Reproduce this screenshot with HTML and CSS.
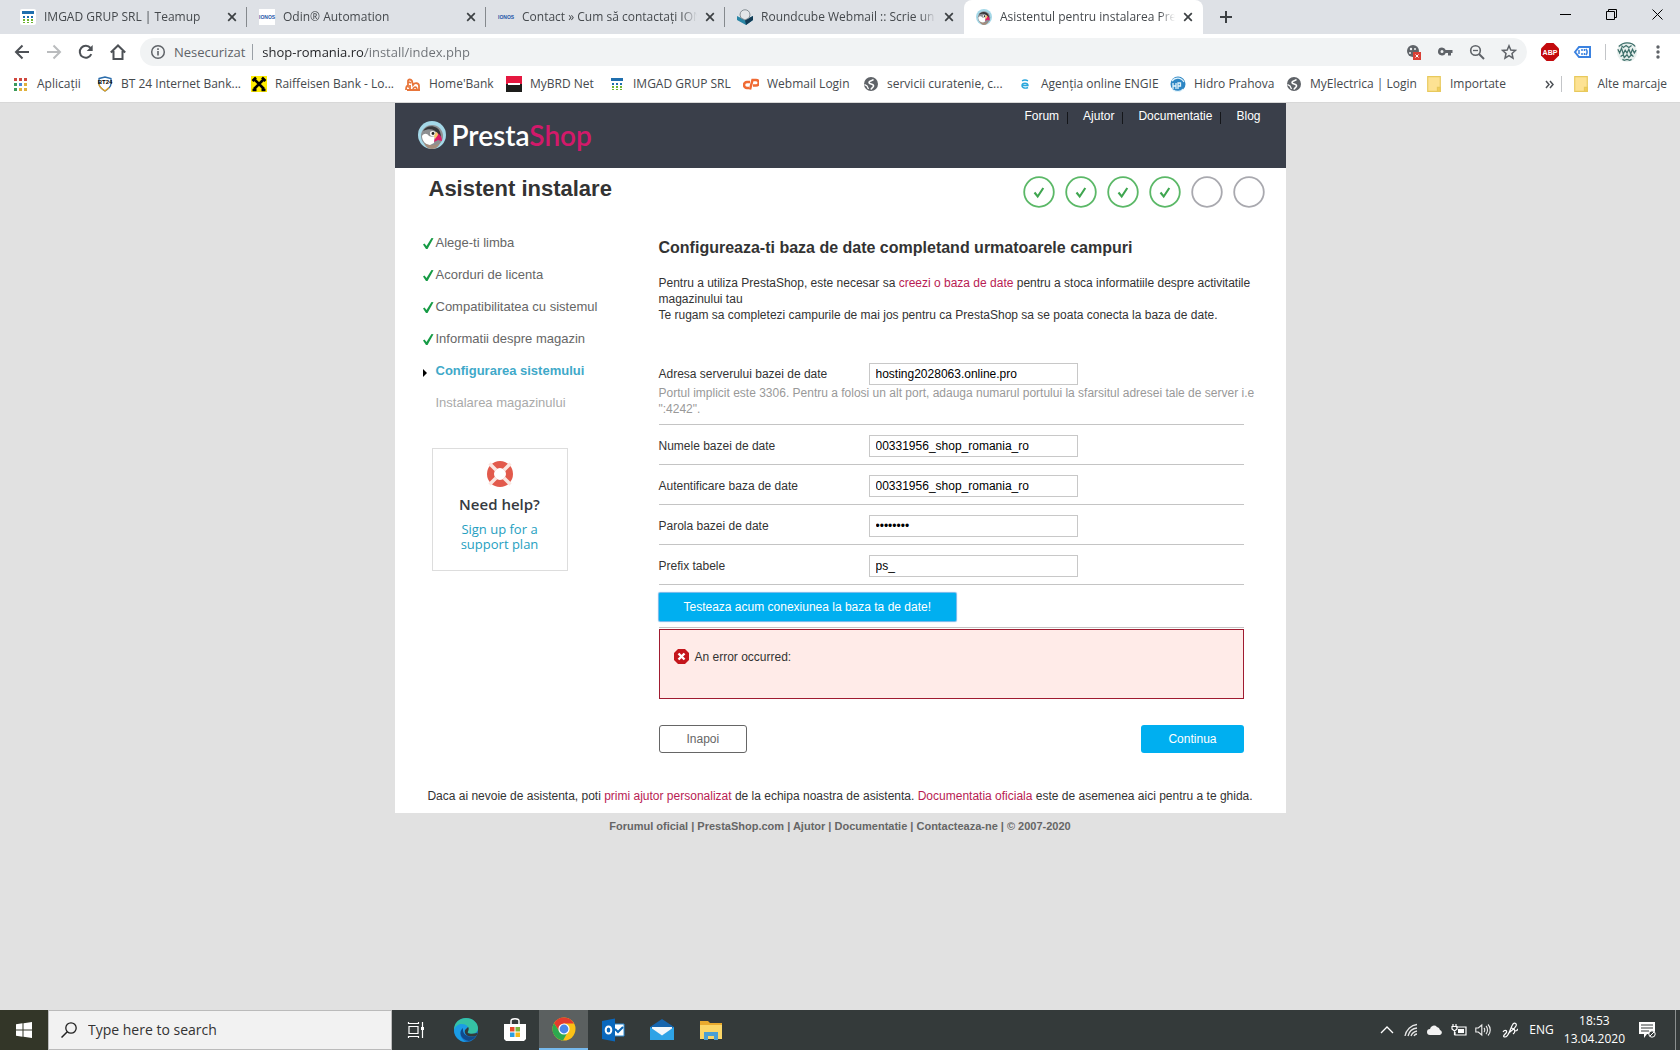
FILE: index.html
```html
<!DOCTYPE html>
<html lang="ro">
<head>
<meta charset="utf-8">
<title>Asistentul pentru instalarea PrestaShop</title>
<link rel="stylesheet" href="styles.css">
</head>
<body>
<svg class="defs" aria-hidden="true">
  <symbol id="close" viewBox="0 0 10 10"><path d="M1.2 1.2l7.6 7.6M8.8 1.2L1.2 8.8" stroke="#3c4043" stroke-width="1.7" fill="none"/></symbol>
  <symbol id="teamup" viewBox="0 0 16 16"><rect x="2" y="2" width="12" height="3" fill="#1f6fae"/><g fill="#1f6fae"><rect x="3" y="7" width="2" height="2"/><rect x="7" y="7" width="2" height="2"/><rect x="11" y="7" width="2" height="2"/></g><g fill="#6db52e"><rect x="3" y="10" width="2" height="2"/><rect x="7" y="10" width="2" height="2"/><rect x="11" y="10" width="2" height="2"/><rect x="3" y="13" width="2" height="1"/><rect x="7" y="13" width="2" height="1"/><rect x="11" y="13" width="2" height="1"/></g></symbol>
  <symbol id="globe" viewBox="0 0 16 16"><circle cx="8" cy="8" r="7" fill="#5f6368"/><path d="M10.500 3.500C9 5 6 4.500 6 6.500s4 1 4.500 3-2 2-2.500 4" fill="none" stroke="#fff" stroke-width="1.600"/><path d="M1.500 8.500L4 10l1.500 3" fill="none" stroke="#fff" stroke-width="1.300"/></symbol>
  <symbol id="folder" viewBox="0 0 12 14"><path d="M.5.5h11v13h-11z" fill="#fde293" stroke="#e8c95c"/><path d="M9 10h2.500v3.500H9z" fill="#f3cf5b" stroke="#e8c95c"/></symbol>
  <symbol id="puffin" viewBox="0 0 28 28"><circle cx="14" cy="14" r="14" fill="#a4d8e8"/><circle cx="14" cy="15" r="11" fill="#8d8f92"/><path d="M5 10c3-5 9-6 14-3 3 2 4 6 4 10l-3-4c-3-5-9-6-15-3z" fill="#37373a"/><path d="M4 15c2-3 5-3 7 0 2 1 5 1 6 0l-1 7-4 2c-4 0-8-4-8-9z" fill="#fff"/><path d="M12 11c2-2 5-1 6 1l-1 3c-2 1-4 0-5-1z" fill="#f4f4f4"/><circle cx="15" cy="12.500" r="1.400" fill="#222"/><path d="M18 12c3 0 6 3 6 8l-4-1-4 2z" fill="#df1a67"/><path d="M18 11c1 0 2 1 2 3l-3 4-1-3z" fill="#f5c66a"/><path d="M6 22c5 3 11 3 16 0-1 3-4 6-8 6s-7-3-8-6z" fill="#a58d7c"/></symbol>
  <symbol id="tick" viewBox="0 0 12 13"><path d="M1 7.500l1.500-1 2 2.500L9.500 1l2 .3L5.500 12H4z" fill="#169b45"/></symbol>
  <symbol id="step-done" viewBox="0 0 32 32"><circle cx="16" cy="16" r="14.800" fill="#fff" stroke="#5bb867" stroke-width="1.800"/><path d="M11.500 16.500l3.200 4 5.600-8.500" fill="none" stroke="#3fa650" stroke-width="2.100"/></symbol>
  <symbol id="step-todo" viewBox="0 0 32 32"><circle cx="16" cy="16" r="14.800" fill="#fff" stroke="#a9a9af" stroke-width="1.800"/></symbol>
</svg>

<header class="browser">
  <div class="tabs">
    <div class="tab"><svg class="fav"><rect width="16" height="16" rx="2" fill="#fff"/><use href="#teamup"/></svg><span class="tab-title">IMGAD GRUP SRL | Teamup</span><button class="tab-close" aria-label="Close"><svg><use href="#close"/></svg></button></div>
    <div class="tab"><span class="fav ionos boxed">IONOS</span><span class="tab-title">Odin® Automation</span><button class="tab-close" aria-label="Close"><svg><use href="#close"/></svg></button></div>
    <div class="tab"><span class="fav ionos">IONOS</span><span class="tab-title">Contact » Cum să contactați IONOS</span><button class="tab-close" aria-label="Close"><svg><use href="#close"/></svg></button></div>
    <div class="tab last"><svg class="fav" viewBox="0 0 16 16"><path d="M0 7l8 4 8-4v4l-7 5-9-5z" fill="#2a86a6"/><path d="M8 11l8-4v4l-7 5z" fill="#123b55"/><path d="M3 6c0-7 10-7 10 0l-1 3-4 2-4-2z" fill="#e3e6e8" stroke="#6f7a80" stroke-width=".8"/></svg><span class="tab-title">Roundcube Webmail :: Scrie un mesaj</span><button class="tab-close" aria-label="Close"><svg><use href="#close"/></svg></button></div>
    <div class="tab active"><svg class="fav"><use href="#puffin"/></svg><span class="tab-title">Asistentul pentru instalarea PrestaShop</span><button class="tab-close" aria-label="Close"><svg><use href="#close"/></svg></button></div>
    <button class="new-tab" aria-label="New tab"><svg viewBox="0 0 12 12"><path d="M6 0v12M0 6h12" stroke="#3c4043" stroke-width="2"/></svg></button>
    <div class="window-buttons">
      <button aria-label="Minimize"><svg viewBox="0 0 11 11"><path d="M0 5.500h11" stroke="#000"/></svg></button>
      <button aria-label="Restore"><svg viewBox="0 0 11 11"><path d="M.5 2.500h8v8h-8zM2.500 2.500v-2h8v8h-2" stroke="#000" fill="none"/></svg></button>
      <button aria-label="Close window"><svg viewBox="0 0 11 11"><path d="M.5.5l10 10M10.500.5l-10 10" stroke="#000"/></svg></button>
    </div>
  </div>

  <div class="toolbar">
    <button class="tool" aria-label="Back"><svg viewBox="0 0 16 16"><path d="M15 8H2.500M8.500 1.500L2 8l6.500 6.500" fill="none" stroke="#4d5156" stroke-width="2"/></svg></button>
    <button class="tool" aria-label="Forward"><svg viewBox="0 0 16 16"><path d="M1 8h12.500M7.500 1.500L14 8l-6.500 6.500" fill="none" stroke="#babcbe" stroke-width="2"/></svg></button>
    <button class="tool" aria-label="Reload"><svg viewBox="0 0 16 16"><path d="M13.300 10.200A6 6 0 1 1 12.500 4" fill="none" stroke="#4d5156" stroke-width="2"/><path d="M14.700 1v6H8.700z" fill="#4d5156"/></svg></button>
    <button class="tool" aria-label="Home"><svg viewBox="0 0 16 16"><path d="M.8 8.500L8 1.500l7.200 7M3.500 7v8h9V7" fill="none" stroke="#4d5156" stroke-width="2"/></svg></button>
    <div class="omnibox">
      <svg viewBox="0 0 16 16"><circle cx="8" cy="8" r="6.300" fill="none" stroke="#5f6368" stroke-width="1.500"/><path d="M8 7v4.500M8 4.300v1.600" stroke="#5f6368" stroke-width="1.600"/></svg>
      <span class="insecure">Nesecurizat</span>
      <input class="url" type="text" aria-label="Adresa" value="shop-romania.ro/install/index.php">
      <svg viewBox="0 0 16 16"><circle cx="8" cy="7" r="6" fill="#5f6368"/><circle cx="6" cy="5" r="1.200" fill="#f1f3f4"/><circle cx="5" cy="9" r="1" fill="#f1f3f4"/><circle cx="10" cy="5" r="1" fill="#f1f3f4"/><path d="M8 8h8v8H8z" fill="#d93f35"/><path d="M10.500 10.500l3 3m0-3l-3 3" stroke="#fff"/></svg>
      <svg viewBox="0 0 16 16"><path d="M5 3.500a4 4 0 1 0 3.700 5.500H11v2.500h3V9h1.500V6H8.700A4 4 0 0 0 5 3.500zM5 6a1.500 1.500 0 1 1 0 3 1.500 1.500 0 0 1 0-3z" fill="#5f6368"/></svg>
      <svg viewBox="0 0 16 16"><circle cx="6.500" cy="6.500" r="4.800" fill="none" stroke="#5f6368" stroke-width="1.600"/><path d="M10 10l5 5" stroke="#5f6368" stroke-width="1.900"/><path d="M4 6.500h5" stroke="#5f6368" stroke-width="1.300"/></svg>
      <svg viewBox="0 0 16 16"><path d="M8 1.800l1.800 4.200 4.700.4-3.500 3.100 1 4.600L8 11.700l-4 2.400 1-4.600L1.500 6.400l4.700-.4z" fill="none" stroke="#5f6368" stroke-width="1.500"/></svg>
    </div>
    <div class="extensions">
      <svg viewBox="0 0 18 18"><path d="M5.500 0h7L18 5.500v7L12.500 18h-7L0 12.500v-7z" fill="#c30a0d"/><text x="9" y="12" class="abp">ABP</text></svg>
      <svg viewBox="0 0 18 18"><path d="M2 9l4-5h11v10H6z" fill="#fff" stroke="#3b82e0" stroke-width="2"/><path d="M9 6v2m0 2v2M13 6c1.500 2 1.500 4 0 6M11.500 6v2m0 2v2M6 7v4" stroke="#3b82e0" stroke-width="1.500" fill="none"/></svg>
      <span class="bar"></span>
      <svg class="avatar" viewBox="0 0 24 24"><circle cx="12" cy="12" r="11" fill="#e8f0ee"/><path d="M2 9l2 4 2-5 2 6 2-4 2 3 2-4 2 5 2-5 2 4 2-3M3 6c3-3 6-4 9-4s7 1 9 4M5 17l3-2 1 3 3-3 2 3 3-3 2 2M7 20l2 1 3-1 3 1 2-1M6 5l2 2 3-2 3 2 3-2" fill="none" stroke="#3f706b" stroke-width="1.400"/></svg>
      <svg class="menu" viewBox="0 0 4 16"><g fill="#5f6368"><circle cx="2" cy="3" r="1.700"/><circle cx="2" cy="8" r="1.700"/><circle cx="2" cy="13" r="1.700"/></g></svg>
    </div>
  </div>

  <nav class="bookmarks">
    <a href="#"><svg viewBox="0 0 16 16"><g fill="#d0483e"><path d="M1 2h3v3H1zM6 2h3v3H6zM11 2h3v3h-3z"/></g><path d="M1 7h3v3H1z" fill="#3a9a5b"/><path d="M6 7h3v3H6z" fill="#4a86d8"/><path d="M11 7h3v3h-3zM11 12h3v3h-3zM6 12h3v3H6z" fill="#e0b13c"/><path d="M1 12h3v3H1z" fill="#3a9a5b"/></svg>Aplicații</a>
    <a href="#"><svg viewBox="0 0 16 16"><path d="M2 2.500l6-1.500 6 1.500v5c0 3-2 5-6 7.500-4-2.500-6-4.500-6-7.500z" fill="#fff" stroke="#2a6cab" stroke-width="1.300"/><path d="M2 8c0 3 2 4.500 6 7l4-3.500" fill="none" stroke="#eaa51f" stroke-width="1.300"/><text x="8" y="8" class="bt">BT24</text></svg>BT 24 Internet Bank...</a>
    <a href="#"><svg viewBox="0 0 16 16"><path d="M0 0h16v16H0z" fill="#ffed00"/><path d="M3 3l10 10M13 3L3 13M1.500 5l3.500-3.500M11 1.500L14.500 5M1.500 14h4M10.500 14h4" stroke="#000" stroke-width="2.600"/></svg>Raiffeisen Bank - Lo...</a>
    <a href="#"><svg viewBox="0 0 16 16"><path d="M1 14c0-3 1-5 2-4V5c0-2 3-2 4 0l1 4c2-3 6-2 6 1v4M2 14h13M5 14V9m3 5c0-3 3-4 4-1M4 6l2 1" fill="none" stroke="#e8753a" stroke-width="1.800"/></svg>Home'Bank</a>
    <a href="#"><svg viewBox="0 0 16 16"><path d="M0 0h16v8H0z" fill="#e5173f"/><path d="M0 8h16v8H0z" fill="#1d1d1b"/><path d="M2 7h12v2H2z" fill="#fff"/></svg>MyBRD Net</a>
    <a href="#"><svg><use href="#teamup"/></svg>IMGAD GRUP SRL</a>
    <a href="#"><svg viewBox="0 0 16 16"><path d="M7 6H4a2.500 2.500 0 0 0 0 6h2M7 13.500L9.500 4H13a2.300 2.300 0 0 1 0 5.500H10" fill="none" stroke="#f06a33" stroke-width="2.500"/></svg>Webmail Login</a>
    <a href="#"><svg><use href="#globe"/></svg>servicii curatenie, c...</a>
    <a href="#"><svg viewBox="0 0 16 16"><path d="M5 9.500h6C11 6.500 5 6.500 5 9.500s4 3 6 2M5 4.800c2-1 4-1 6 0" fill="none" stroke="#2aa7dc" stroke-width="1.400"/></svg>Agenția online ENGIE</a>
    <a href="#"><svg viewBox="0 0 16 16"><circle cx="8" cy="8" r="7.500" fill="#2d86c4"/><path d="M2 5c3-4 9-4 12 1M3 7v6M6 7v6M3 10h3M8 13V7h2.500v3H8M3 14c3 2 8 2 10-1" fill="none" stroke="#e2f3fb" stroke-width="1.300"/></svg>Hidro Prahova</a>
    <a href="#"><svg><use href="#globe"/></svg>MyElectrica | Login</a>
    <a href="#"><svg><use href="#folder"/></svg>Importate</a>
    <button class="more" aria-label="Mai multe"><svg viewBox="0 0 9 9"><path d="M1 1l3 3.500L1 8M5 1l3 3.500L5 8" fill="none" stroke="#4d5156" stroke-width="1.500"/></svg></button>
    <a class="other" href="#"><svg><use href="#folder"/></svg>Alte marcaje</a>
  </nav>
</header>

<div class="page">
  <div class="wizard">
    <header class="shop-header">
      <a class="logo" href="#"><svg><use href="#puffin"/></svg><span>Presta<b>Shop</b></span></a>
      <nav class="shop-nav"><a href="#">Forum</a><a href="#">Ajutor</a><a href="#">Documentatie</a><a href="#">Blog</a></nav>
    </header>
    <div class="title-row">
      <h1>Asistent instalare</h1>
      <div class="progress"><svg><use href="#step-done"/></svg><svg><use href="#step-done"/></svg><svg><use href="#step-done"/></svg><svg><use href="#step-done"/></svg><svg><use href="#step-todo"/></svg><svg><use href="#step-todo"/></svg></div>
    </div>
    <div class="columns">
      <aside>
        <ol class="steps">
          <li><svg><use href="#tick"/></svg>Alege-ti limba</li>
          <li><svg><use href="#tick"/></svg>Acorduri de licenta</li>
          <li><svg><use href="#tick"/></svg>Compatibilitatea cu sistemul</li>
          <li><svg><use href="#tick"/></svg>Informatii despre magazin</li>
          <li class="current"><svg viewBox="0 0 12 13"><path d="M1 4l4 4-4 4z" fill="#000"/></svg>Configurarea sistemului</li>
          <li class="pending"><svg></svg>Instalarea magazinului</li>
        </ol>
        <a class="help" href="#">
          <svg viewBox="0 0 26 26"><circle cx="13" cy="13" r="9.500" fill="none" stroke="#e25a4c" stroke-width="7"/><g stroke="#fbe6e1" stroke-width="3.500"><path d="M2.500 2.500l6.500 6.500M23.500 2.500L17 9M2.500 23.500L9 17M23.500 23.500L17 17"/></g></svg>
          <strong>Need help?</strong>
          <span>Sign up for a<br>support plan</span>
        </a>
      </aside>
      <form class="config" onsubmit="return false">
        <h2>Configureaza-ti baza de date completand urmatoarele campuri</h2>
        <p class="intro">Pentru a utiliza PrestaShop, este necesar sa <a href="#">creezi o baza de date</a> pentru a stoca informatiile despre activitatile magazinului tau<br>Te rugam sa completezi campurile de mai jos pentru ca PrestaShop sa se poata conecta la baza de date.</p>
        <div class="field"><label for="server">Adresa serverului bazei de date</label><input id="server" type="text" value="hosting2028063.online.pro"><p class="hint">Portul implicit este 3306. Pentru a folosi un alt port, adauga numarul portului la sfarsitul adresei tale de server i.e ":4242".</p></div>
        <div class="field"><label for="name">Numele bazei de date</label><input id="name" type="text" value="00331956_shop_romania_ro"></div>
        <div class="field"><label for="login">Autentificare baza de date</label><input id="login" type="text" value="00331956_shop_romania_ro"></div>
        <div class="field"><label for="password">Parola bazei de date</label><input id="password" type="password" value="password"></div>
        <div class="field last-field"><label for="prefix">Prefix tabele</label><input id="prefix" type="text" value="ps_"></div>
        <div class="test"><button class="primary focus" type="button">Testeaza acum conexiunea la baza ta de date!</button></div>
        <div class="error"><svg viewBox="0 0 15 15"><path d="M4 0h7l4 4v7l-4 4H4l-4-4V4z" fill="#c4161c"/><path d="M4.500 4.500l6 6m0-6l-6 6" stroke="#fff" stroke-width="2.400"/></svg>An error occurred:</div>
        <div class="actions"><button class="secondary" type="button">Inapoi</button><button class="primary" type="submit">Continua</button></div>
      </form>
    </div>
    <p class="assist">Daca ai nevoie de asistenta, poti <a href="#">primi ajutor personalizat</a> de la echipa noastra de asistenta. <a href="#">Documentatia oficiala</a> este de asemenea aici pentru a te ghida.</p>
  </div>
  <footer class="links"><a href="#">Forumul oficial</a> | <a href="#">PrestaShop.com</a> | <a href="#">Ajutor</a> | <a href="#">Documentatie</a> | <a href="#">Contacteaza-ne</a> | © 2007-2020</footer>
</div>

<div class="taskbar">
  <button class="start" aria-label="Start"><svg viewBox="0 0 16 16"><path d="M0 2.200l6.500-.9v6.200H0zM7.500 1.200L16 0v7.500H7.500zM0 8.500h6.500v6.200L0 13.800zM7.500 8.500H16V16l-8.500-1.200z" fill="#fff"/></svg></button>
  <div class="search"><svg viewBox="0 0 16 16"><circle cx="10" cy="6" r="5.200" fill="none" stroke="#222" stroke-width="1.300"/><path d="M6.300 9.700L.5 15.500" stroke="#222" stroke-width="1.500"/></svg><input type="text" aria-label="Search" placeholder="Type here to search"></div>
  <button class="app" aria-label="Task view"><svg viewBox="0 0 24 24"><path d="M4 8.500h9v7H4zM3.500 4v1.500h10V4M3.500 20v-1.500h10V20M17.500 4v16" fill="none" stroke="#fff" stroke-width="1.200"/><path d="M16 9h3v3h-3z" fill="#fff"/></svg></button>
  <button class="app" aria-label="Edge"><svg viewBox="0 0 24 24"><circle cx="12" cy="12" r="12" fill="#1679cc"/><path d="M0 12C0 4 6 0 12 0c7 0 12 5 12 10 0 4-3 6-7 6-3 0-4-1-3-3C16 8 6 4 0 12z" fill="#35c1a5"/><path d="M0 12C2 6 8 5 12 7c3 2 3 4 2 6-1 2 0 3 3 3-6 3-10-1-8-6-4 3-4 10 3 14C5 24 0 18 0 12z" fill="#1b9ce5"/><path d="M9 10c-5 4-2 12 6 13 3-1 6-3 7-5-7 3-14-1-13-8z" fill="#114a8b"/><path d="M14 9c2 2-1 5 0 6 1 1 6 1 9 0v2c-3 3-14 2-12-5z" fill="#343a3a"/></svg></button>
  <button class="app" aria-label="Store"><svg viewBox="0 0 24 24"><path d="M8 6V3c0-3 8-3 8 0v3" fill="none" stroke="#fff" stroke-width="1.500"/><path d="M1 6h22v15l-2 2H3l-2-2z" fill="#fff"/><path d="M7 9h4.500v4.500H7z" fill="#e74a2b"/><path d="M12.500 9H17v4.500h-4.500z" fill="#7db53b"/><path d="M7 14.500h4.500V19H7z" fill="#2b9fe3"/><path d="M12.500 14.500H17V19h-4.500z" fill="#f5b91b"/></svg></button>
  <button class="app open" aria-label="Chrome"><svg viewBox="0 0 24 24"><circle cx="12" cy="12" r="11.500" fill="#fbc116"/><path d="M2 6.200A11.500 11.500 0 0 1 22 6.500H12L7 14z" fill="#e33b2e"/><path d="M2 6.200A11.500 11.500 0 0 0 11 23.500l5-9-8 1z" fill="#2da94f"/><circle cx="12" cy="12" r="5.600" fill="#fff"/><circle cx="12" cy="12" r="4.400" fill="#4a86e8"/></svg></button>
  <button class="app" aria-label="Outlook"><svg viewBox="0 0 24 24"><path d="M12 6h11v12H12z" fill="#fff"/><path d="M12 6h11v12H12" fill="none" stroke="#2a8ad4"/><path d="M14 11l3 3 5-5" fill="none" stroke="#0a64b4" stroke-width="2"/><path d="M1 3l13-2.500v23L1 21z" fill="#0a68bd"/><ellipse cx="7.500" cy="12" rx="2.800" ry="3.600" fill="none" stroke="#fff" stroke-width="2"/></svg></button>
  <button class="app" aria-label="Mail"><svg viewBox="0 0 24 24"><path d="M0 9l12-8 12 8v13H0z" fill="#1565ae"/><path d="M0 22V9l12 8 12-8v13z" fill="#2ea3e6"/><path d="M2 9h20v1.500L12 17.500 2 10.500z" fill="#f3f8fc"/></svg></button>
  <button class="app" aria-label="Explorer"><svg viewBox="0 0 24 24"><path d="M1 3h8l2 2h12v16H1z" fill="#e9aa2e"/><path d="M1 7h22v14H1z" fill="#fbd667"/><path d="M5 22v-8h14v8h-4v-4H9v4z" fill="#4a9fd4"/></svg></button>
  <div class="tray">
    <svg viewBox="0 0 16 16"><path d="M2 11l6-6 6 6" fill="none" stroke="#fff" stroke-width="1.300"/></svg>
    <svg viewBox="0 0 16 16"><path d="M2 14C3 8 8 3 14 2.500M5 14c1-4 4-7.500 9-8M8 14c1-2.500 3-4.500 6-5M11 14c.5-1 1.500-2 3-2" fill="none" stroke="#e6e6e6" stroke-width="1.300"/></svg>
    <svg viewBox="0 0 16 16"><path d="M3 13a3 3 0 0 1 0-6 4 4 0 0 1 7-2 4 4 0 0 1 3 3 2.600 2.600 0 0 1 0 5z" fill="#f2f2f2"/></svg>
    <svg viewBox="0 0 16 16"><path d="M5 5h10v8H4v-3M2 2v2.500M5 2v2.500M1 4.500h5V7L3.500 9 1 7zM3.500 9v4" fill="none" stroke="#fff" stroke-width="1.200"/><path d="M7 7h6v4H7z" fill="#fff"/></svg>
    <svg viewBox="0 0 16 16"><path d="M.8 6h2.500l3.500-3v10L3.300 10H.8zM9 6c1 1 1 3 0 4M11 4c2 2 2 6 0 8M13 2.500c3 3 3 8 0 11" fill="none" stroke="#eee" stroke-width="1.100"/></svg>
    <svg class="pen" viewBox="0 0 16 16"><path d="M1 10c2-3 5-1 3 1-3 3-3 4-1 4 4 0 5-9 8-13 2-2 4 0 3 2-2 4-6 5-8 8M9 6c4 0 5 4 2 6M13 9c2 0 3-1 2-2" fill="none" stroke="#fff" stroke-width="1.200"/></svg>
    <span class="lang">ENG</span>
    <time>18:53<br>13.04.2020</time>
    <svg class="note" viewBox="0 0 18 18"><path d="M1 1h16v12H9l-3 4v-4H1z" fill="#fff"/><path d="M3 4h12M3 7h12M3 10h8" stroke="#343a3a" stroke-width="1.200"/><circle cx="14" cy="13" r="3.200" fill="#343a3a" stroke="#fff"/><path d="M12 15l4-4" stroke="#fff"/></svg>
  </div>
</div>
</body>
</html>
```
FILE: styles.css
```css
* { box-sizing: border-box; }
body {
  margin: 0;
  min-height: 100vh;
  display: flex;
  flex-direction: column;
  background: #e1e1e1;
  font: 12px/16px "Liberation Sans", Arial, sans-serif;
  color: #333;
}
a { color: inherit; text-decoration: none; }
button { font: inherit; padding: 0; border: 0; background: none; }
svg { display: block; flex: none; }
.defs { position: absolute; width: 0; height: 0; }

/* browser window */
.browser {
  background: #fff;
  border-bottom: 1px solid #d8d8d8;
  font-family: "Open Sans", "Noto Sans", sans-serif;
  color: #45494d;
}
.tabs { display: flex; height: 34px; padding-left: 8px; background: #dee1e6; }
.tab {
  display: flex;
  align-items: center;
  flex: 0 1 239px;
  min-width: 0;
  gap: 8px;
  padding: 0 10px 0 12px;
  background: linear-gradient(#85898d, #85898d) right center / 1px 20px no-repeat;
}
.tab.last { background: none; }
.tab.active { background: #fff; border-radius: 8px 8px 0 0; }
.fav { width: 16px; height: 16px; flex: none; }
.ionos { font: bold 5px/16px "Liberation Sans", sans-serif; text-align: center; color: #1f56a8; }
.boxed { background: #fff; }
.tab-title {
  flex: 1;
  overflow: hidden;
  white-space: nowrap;
  mask-image: linear-gradient(to left, transparent, #000 16px);
}
.tab-close svg { width: 10px; height: 10px; }
.new-tab { width: 46px; display: grid; place-items: center; }
.new-tab svg { width: 12px; height: 12px; }
.window-buttons { display: flex; margin-left: auto; height: 28px; }
.window-buttons button { width: 46px; display: grid; place-items: center; }
.window-buttons svg { width: 11px; height: 11px; }

.toolbar { display: flex; align-items: center; height: 36px; padding: 0 16px 0 6px; }
.tool { width: 32px; display: grid; place-items: center; }
.tool svg { width: 16px; height: 16px; }
.omnibox {
  flex: 1;
  display: flex;
  align-items: center;
  gap: 16px;
  height: 28px;
  margin-left: 6px;
  padding: 0 10px;
  border-radius: 14px;
  background: #f1f3f4;
  font-size: 13px;
  color: #5f6368;
}
.omnibox svg { width: 16px; height: 16px; }
.insecure { margin-left: -8px; padding-right: 7px; border-right: 1px solid #9aa0a6; }
.url {
  flex: 1;
  min-width: 0;
  margin-left: -7px;
  padding: 0;
  border: 0;
  outline: 0;
  font: 13px/18px "Open Sans", sans-serif;
  color: transparent;
  background: linear-gradient(90deg, #202124 103px, #6c7075 103px);
  background-clip: text;
}
.extensions { display: flex; align-items: center; gap: 14px; margin-left: 14px; }
.extensions svg { width: 18px; height: 18px; }
.extensions .avatar { width: 22px; height: 22px; margin-left: -4px; }
.extensions .menu { width: 4px; height: 16px; margin: 0 4px; }
.bar { width: 1px; height: 16px; background: #c3c5c8; }
.abp { font: bold 7px "Liberation Sans", sans-serif; fill: #fff; text-anchor: middle; }
.bt { font: bold 6px "Liberation Sans", sans-serif; fill: #000; text-anchor: middle; }

.bookmarks {
  display: grid;
  grid-template-columns: 84px 154px 154px 101px 103px 134px 120px 154px 153px 116px 140px 1fr 16px auto;
  align-items: center;
  height: 32px;
  padding: 0 13px 4px;
}
.bookmarks a { display: flex; align-items: center; gap: 8px; white-space: nowrap; }
.bookmarks svg { width: 16px; height: 16px; }
.bookmarks .more svg { width: 9px; height: 9px; }
.bookmarks .other { padding-left: 11px; border-left: 1px solid #c3c5c8; }

/* installer */
.page { flex: 1; }
.wizard { max-width: 891px; margin: 0 auto; background: #fff; overflow: hidden; }
.shop-header {
  display: flex;
  justify-content: space-between;
  height: 65px;
  padding: 0 25px 2px 23px;
  background: #3a3f4a;
  color: #fff;
}
.logo { display: flex; align-items: center; gap: 6px; font: 600 28px/32px Lato, sans-serif; }
.logo svg { width: 28px; height: 28px; }
.logo b { font-weight: 600; color: #d3196a; }
.shop-nav { display: flex; align-items: flex-start; padding-top: 5px; }
.shop-nav a { padding-right: 9px; margin-right: 15px; background: linear-gradient(#14161a, #14161a) right bottom / 1px 12px no-repeat; }
.shop-nav a:last-child { padding: 0; margin: 0; background: none; }
.title-row { display: flex; justify-content: space-between; padding: 8px 21px 0 34px; }
h1 { margin: 0; font-size: 22px; line-height: 26px; }
.progress { display: flex; gap: 10px; }
.progress svg { width: 32px; height: 32px; }
.columns { display: grid; grid-template-columns: 264px 1fr; padding-right: 42px; }
aside { padding: 19px 0 0 27px; }
.steps { list-style: none; margin: 0; padding: 0; font-size: 13px; color: #666; }
.steps li { display: flex; align-items: center; gap: 2px; height: 32px; }
.steps svg { width: 12px; height: 13px; }
.steps .current { font-weight: bold; color: #3fa9c9; }
.steps .pending { color: #aaa; }
.help {
  display: flex;
  flex-direction: column;
  align-items: center;
  width: 136px;
  height: 123px;
  margin: 29px 0 0 10px;
  padding-top: 12px;
  border: 1px solid #ddd;
  font: 13px/15px "Open Sans", sans-serif;
  text-align: center;
  color: #25a0bf;
}
.help svg { width: 26px; height: 26px; }
.help strong { margin: 8px 0 9px; font-size: 15px; line-height: 18px; font-weight: 600; color: #363a41; }
.config { padding-top: 28px; }
h2 { margin: 0 0 15px; font-size: 16px; line-height: 24px; }
/* running text may reach a little past the field rules */
.intro { margin: 0 -16px 40px 0; }
.intro a, .assist a { color: #b81c53; }
.field {
  display: grid;
  grid-template-columns: 210px 209px;
  align-items: center;
  padding-bottom: 7px;
  margin-bottom: 10px;
  border-bottom: 1px solid #c4c4c4;
}
.last-field { margin-bottom: 8px; }
.field input {
  height: 22px;
  padding: 0 6px;
  border: 1px solid #c8c8c8;
  font: 12px/16px "Liberation Sans", Arial, sans-serif;
  color: #000;
}
.hint { grid-column: 1 / -1; margin: 0 -182px 0 0; color: #999; }
.test { padding-bottom: 6px; border-bottom: 1px solid #c4c4c4; }
.primary { height: 28px; padding: 0 27px; border-radius: 3px; background: #00aff0; color: #fff; }
.focus { padding: 0 25px; box-shadow: 0 0 1px 1px #6db5ea; border-radius: 1px; }
.error {
  display: flex;
  gap: 6px;
  height: 70px;
  margin-top: 1px;
  padding: 19px 14px;
  border: 1px solid #a01b30;
  background: #ffebe8;
}
.error svg { width: 15px; height: 15px; }
.actions { display: flex; justify-content: space-between; margin-top: 26px; }
.secondary { height: 28px; padding: 0 27px; border: 1px solid #666; border-radius: 3px; color: #666; }
.assist { margin: 35px 0 9px; text-align: center; }
.links { padding-top: 5px; text-align: center; font-size: 11px; font-weight: bold; color: #666; }

/* Windows taskbar */
.taskbar {
  display: flex;
  height: 40px;
  background: #343a3a;
  color: #fff;
  font-family: "Open Sans", "Noto Sans", sans-serif;
}
.start { width: 48px; display: grid; place-items: center; background: #333628; }
.start svg { width: 16px; height: 16px; }
.search {
  flex: 0 1 344px;
  display: flex;
  align-items: center;
  gap: 11px;
  padding: 0 12px;
  border: 1px solid #bbb;
  background: #f2f2f2;
}
.search svg { width: 16px; height: 16px; }
.search input { flex: 1; min-width: 0; padding: 0; border: 0; background: none; font: 14px/20px "Open Sans", sans-serif; }
.search input::placeholder { color: #333; }
.app { width: 49px; display: grid; place-items: center; }
.app svg { width: 24px; height: 24px; }
.app.open { background: #5b6060; border-bottom: 2px solid #76b9ed; }
.tray {
  display: flex;
  align-items: center;
  gap: 8px;
  margin: 0 4px 0 auto;
  padding-right: 19px;
  border-right: 1px solid #8b8f8f;
}
.tray svg { width: 16px; height: 16px; }
.tray .pen { margin: 0 3px; }
.tray time { margin: 0 5px 0 2px; line-height: 18px; text-align: center; }
.tray .note { width: 18px; height: 18px; }
```
